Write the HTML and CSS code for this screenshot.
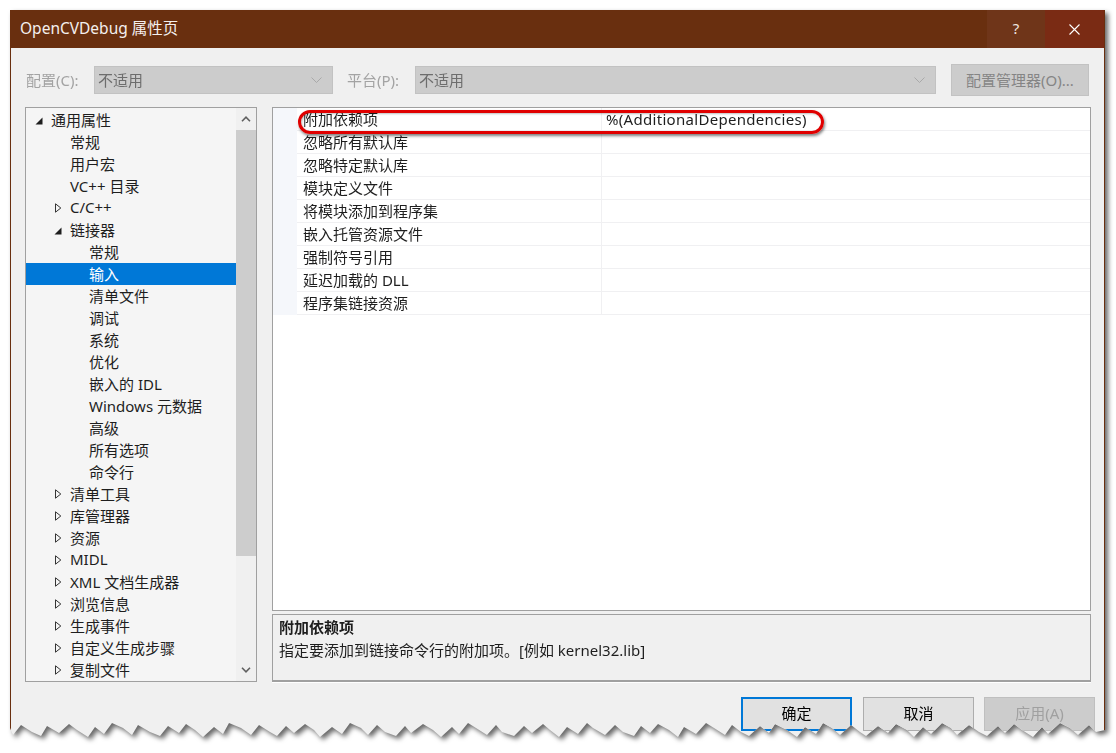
FILE: index.html
```html
<!DOCTYPE html>
<html lang="zh-CN">
<head>
<meta charset="utf-8">
<title>OpenCVDebug 属性页</title>
<link rel="stylesheet" href="styles.css">
</head>
<body>
<div class="frame">
  <div class="window">
    <div class="titlebar">
      <div class="title">OpenCVDebug 属性页</div>
      <div class="tb-btn help">?</div>
      <div class="tb-btn close"><svg width="11" height="11" viewBox="0 0 11 11"><path d="M0.5 0.5L10.5 10.5M10.5 0.5L0.5 10.5" stroke="#fff" stroke-width="1.1"/></svg></div>
    </div>
    <div class="body">
      <div class="toolbar">
        <span class="lbl">配置(C):</span>
        <div class="combo combo-cfg"><span>不适用</span><svg width="11" height="6" viewBox="0 0 11 6"><path d="M0.5 0.5L5.5 5.5L10.5 0.5" stroke="#a9a9a9" fill="none"/></svg></div>
        <span class="lbl lbl-plat">平台(P):</span>
        <div class="combo combo-plat"><span>不适用</span><svg width="11" height="6" viewBox="0 0 11 6"><path d="M0.5 0.5L5.5 5.5L10.5 0.5" stroke="#a9a9a9" fill="none"/></svg></div>
        <div class="mgr-btn">配置管理器(O)...</div>
      </div>
      <div class="main">
        <div class="tree">
          <div class="tree-list">
            <div class="node l0"><span class="tw"><svg class="exp" width="8" height="8" viewBox="0 0 8 8"><path d="M7.5 0.5V7.5H0.5Z" fill="#1e1e1e"/></svg></span>通用属性</div>
            <div class="node l1"><span class="tw"></span>常规</div>
            <div class="node l1"><span class="tw"></span>用户宏</div>
            <div class="node l1"><span class="tw"></span>VC++ 目录</div>
            <div class="node l1"><span class="tw"><svg class="col" width="8" height="10" viewBox="0 0 8 10"><path d="M1.5 0.8L6.8 5L1.5 9.2Z" fill="none" stroke="#333"/></svg></span>C/C++</div>
            <div class="node l1"><span class="tw"><svg class="exp" width="8" height="8" viewBox="0 0 8 8"><path d="M7.5 0.5V7.5H0.5Z" fill="#1e1e1e"/></svg></span>链接器</div>
            <div class="node l2"><span class="tw"></span>常规</div>
            <div class="node l2 sel"><span class="tw"></span>输入</div>
            <div class="node l2"><span class="tw"></span>清单文件</div>
            <div class="node l2"><span class="tw"></span>调试</div>
            <div class="node l2"><span class="tw"></span>系统</div>
            <div class="node l2"><span class="tw"></span>优化</div>
            <div class="node l2"><span class="tw"></span>嵌入的 IDL</div>
            <div class="node l2"><span class="tw"></span>Windows 元数据</div>
            <div class="node l2"><span class="tw"></span>高级</div>
            <div class="node l2"><span class="tw"></span>所有选项</div>
            <div class="node l2"><span class="tw"></span>命令行</div>
            <div class="node l1"><span class="tw"><svg class="col" width="8" height="10" viewBox="0 0 8 10"><path d="M1.5 0.8L6.8 5L1.5 9.2Z" fill="none" stroke="#333"/></svg></span>清单工具</div>
            <div class="node l1"><span class="tw"><svg class="col" width="8" height="10" viewBox="0 0 8 10"><path d="M1.5 0.8L6.8 5L1.5 9.2Z" fill="none" stroke="#333"/></svg></span>库管理器</div>
            <div class="node l1"><span class="tw"><svg class="col" width="8" height="10" viewBox="0 0 8 10"><path d="M1.5 0.8L6.8 5L1.5 9.2Z" fill="none" stroke="#333"/></svg></span>资源</div>
            <div class="node l1"><span class="tw"><svg class="col" width="8" height="10" viewBox="0 0 8 10"><path d="M1.5 0.8L6.8 5L1.5 9.2Z" fill="none" stroke="#333"/></svg></span>MIDL</div>
            <div class="node l1"><span class="tw"><svg class="col" width="8" height="10" viewBox="0 0 8 10"><path d="M1.5 0.8L6.8 5L1.5 9.2Z" fill="none" stroke="#333"/></svg></span>XML 文档生成器</div>
            <div class="node l1"><span class="tw"><svg class="col" width="8" height="10" viewBox="0 0 8 10"><path d="M1.5 0.8L6.8 5L1.5 9.2Z" fill="none" stroke="#333"/></svg></span>浏览信息</div>
            <div class="node l1"><span class="tw"><svg class="col" width="8" height="10" viewBox="0 0 8 10"><path d="M1.5 0.8L6.8 5L1.5 9.2Z" fill="none" stroke="#333"/></svg></span>生成事件</div>
            <div class="node l1"><span class="tw"><svg class="col" width="8" height="10" viewBox="0 0 8 10"><path d="M1.5 0.8L6.8 5L1.5 9.2Z" fill="none" stroke="#333"/></svg></span>自定义生成步骤</div>
            <div class="node l1"><span class="tw"><svg class="col" width="8" height="10" viewBox="0 0 8 10"><path d="M1.5 0.8L6.8 5L1.5 9.2Z" fill="none" stroke="#333"/></svg></span>复制文件</div>
          </div>
          <div class="vscroll">
            <div class="sb-btn"><svg width="10" height="6" viewBox="0 0 10 6"><path d="M1 5.2L5 1.2L9 5.2" stroke="#606060" stroke-width="1.6" fill="none"/></svg></div>
            <div class="thumb"></div>
            <div class="track"></div>
            <div class="sb-btn"><svg width="10" height="6" viewBox="0 0 10 6"><path d="M1 0.8L5 4.8L9 0.8" stroke="#606060" stroke-width="1.6" fill="none"/></svg></div>
          </div>
        </div>
        <div class="right">
          <div class="grid">
            <div class="prop"><span class="pn">附加依赖项</span><span class="pv">%(AdditionalDependencies)</span></div>
            <div class="prop"><span class="pn">忽略所有默认库</span><span class="pv"></span></div>
            <div class="prop"><span class="pn">忽略特定默认库</span><span class="pv"></span></div>
            <div class="prop"><span class="pn">模块定义文件</span><span class="pv"></span></div>
            <div class="prop"><span class="pn">将模块添加到程序集</span><span class="pv"></span></div>
            <div class="prop"><span class="pn">嵌入托管资源文件</span><span class="pv"></span></div>
            <div class="prop"><span class="pn">强制符号引用</span><span class="pv"></span></div>
            <div class="prop"><span class="pn">延迟加载的 DLL</span><span class="pv"></span></div>
            <div class="prop"><span class="pn">程序集链接资源</span><span class="pv"></span></div>
            <div class="mark"></div>
          </div>
          <div class="desc">
            <div class="desc-title">附加依赖项</div>
            <div class="desc-text">指定要添加到链接命令行的附加项。[例如 kernel32.lib]</div>
          </div>
        </div>
      </div>
      <div class="buttons">
        <div class="btn btn-default">确定</div>
        <div class="btn btn-cancel">取消</div>
        <div class="btn btn-disabled">应用(A)</div>
      </div>
    </div>
  </div>
</div>
</body>
</html>
```

FILE: styles.css
```css
* { box-sizing: border-box; }
html, body { margin: 0; padding: 0; background: #ffffff; }
body {
  font-family: "Noto Sans", "Noto Sans CJK SC", sans-serif;
  font-size: 15px;
  color: #000;
  width: 1116px;
  height: 753px;
  overflow: hidden;
}
.frame {
  padding: 10px 0 0 10px;
  filter: drop-shadow(3px 3px 2.5px rgba(0,0,0,0.6));
}
.window {
  width: 1095px;
  height: 740px;
  background: #f0f0f0;
  border-left: 1px solid #692f0f;
  border-right: 1px solid #692f0f;
  clip-path: polygon(0 0, 1095px 0, 1095px 720px, 1086px 722px, 1079px 715px, 1068px 725px, 1060px 718px, 1050px 713px, 1038px 724px, 1032px 717px, 1023px 727px, 1012px 720px, 1004px 714px, 995px 723px, 988px 716px, 977px 726px, 969px 722px, 959px 715px, 947px 725px, 941px 718px, 932px 713px, 921px 724px, 913px 717px, 904px 727px, 897px 720px, 886px 714px, 878px 723px, 868px 716px, 856px 726px, 850px 722px, 841px 715px, 830px 725px, 822px 718px, 813px 713px, 806px 724px, 795px 717px, 787px 727px, 777px 720px, 765px 714px, 759px 723px, 750px 716px, 739px 726px, 731px 722px, 722px 715px, 715px 725px, 704px 718px, 696px 713px, 686px 724px, 674px 717px, 668px 727px, 659px 720px, 648px 714px, 640px 723px, 631px 716px, 624px 726px, 613px 722px, 605px 715px, 595px 725px, 583px 718px, 577px 713px, 568px 724px, 557px 717px, 549px 727px, 540px 720px, 533px 714px, 522px 723px, 514px 716px, 504px 726px, 492px 722px, 486px 715px, 477px 725px, 466px 718px, 458px 713px, 449px 724px, 442px 717px, 431px 727px, 423px 720px, 413px 714px, 401px 723px, 395px 716px, 386px 726px, 375px 722px, 367px 715px, 358px 725px, 351px 718px, 340px 713px, 332px 724px, 322px 717px, 310px 727px, 304px 720px, 295px 714px, 284px 723px, 276px 716px, 267px 726px, 260px 722px, 249px 715px, 241px 725px, 231px 718px, 219px 713px, 213px 724px, 204px 717px, 193px 727px, 185px 720px, 176px 714px, 169px 723px, 158px 716px, 150px 726px, 140px 722px, 128px 715px, 122px 725px, 113px 718px, 102px 713px, 94px 724px, 85px 717px, 78px 727px, 67px 720px, 59px 714px, 49px 723px, 37px 716px, 31px 726px, 22px 722px, 11px 715px, 3px 725px, 0 718px);
}

/* title bar */
.titlebar {
  height: 38px;
  display: flex;
  background: #692f0f;
  color: #ffffff;
}
.title {
  flex: 1;
  padding-left: 9px;
  line-height: 37px;
  font-size: 15.5px;
  color: #f4f0ee;
}
.tb-btn {
  display: flex;
  align-items: center;
  justify-content: center;
}
.help {
  width: 58px;
  background: #6f3519;
  font-size: 15px;
  color: #f0e6e0;
  padding-bottom: 2px;
}
.close {
  width: 59px;
  background: #7a2b14;
}

/* body */
.body {
  padding: 16px 9px 0 14px;
}
.toolbar {
  height: 32px;
  display: flex;
  align-items: center;
  padding-left: 1px;
}
.lbl {
  width: 68px;
  color: #a3a3a3;
  font-size: 15px;
  padding-bottom: 2px;
}
.lbl-plat { margin-left: 14px; }
.combo {
  height: 28px;
  background: #cccccc;
  border: 1px solid #c2c2c2;
  display: flex;
  align-items: center;
  justify-content: space-between;
  padding: 0 10px 2px 3px;
  color: #6d6d6d;
}
.combo svg { margin-top: 2px; }
.combo-cfg { width: 239px; }
.combo-plat { width: 521px; }
.mgr-btn {
  margin-left: 15px;
  width: 138px;
  height: 32px;
  background: #cccccc;
  border: 1px solid #c2c2c2;
  color: #858585;
  display: flex;
  align-items: center;
  justify-content: center;
  padding-bottom: 2px;
}

.main {
  margin-top: 11px;
  display: flex;
  gap: 15px;
  height: 575px;
}

/* tree */
.tree {
  width: 232px;
  height: 575px;
  border: 1px solid #a0a0a0;
  background: #f5f5f5;
  display: flex;
}
.tree-list {
  width: 210px;
  padding-top: 1px;
  overflow: hidden;
}
.node {
  height: 22px;
  display: flex;
  align-items: center;
  white-space: nowrap;
  color: #1e1e1e;
  padding-bottom: 2px;
}
.node.l0 { padding-left: 9px; }
.node.l1 { padding-left: 28px; }
.node.l2 { padding-left: 47px; }
.tw {
  width: 16px;
  height: 20px;
  flex: none;
  display: flex;
  align-items: center;
}
.tw .exp { margin-top: 4px; }
.tw .col { margin-top: 2px; }
.node.sel {
  background: #0078d7;
  color: #ffffff;
}
.vscroll {
  width: 20px;
  display: flex;
  flex-direction: column;
  background: #f0f0f0;
}
.sb-btn {
  height: 22px;
  display: flex;
  align-items: center;
  justify-content: center;
}
.thumb {
  height: 426px;
  background: #cdcdcd;
}
.track { flex: 1; }

/* right column */
.right {
  width: 819px;
  display: flex;
  flex-direction: column;
}
.grid {
  position: relative;
  height: 504px;
  background: #ffffff;
  border: 1px solid #a0a0a0;
}
.prop {
  height: 23px;
  display: flex;
  margin-left: 24px;
  border-bottom: 1px solid #f0f0f2;
  box-shadow: -24px 0 0 #f5f7fb;
}
.pn {
  width: 305px;
  padding-left: 6px;
  line-height: 22px;
  border-right: 1px solid #f0f0f2;
  color: #1e1e1e;
}
.pv {
  flex: 1;
  padding-left: 4px;
  line-height: 22px;
  color: #1e1e1e;
  letter-spacing: 0.3px;
}
.mark {
  position: absolute;
  left: 25px;
  top: 2px;
  width: 526px;
  height: 24px;
  border: 3px solid #e00000;
  border-radius: 12px;
  box-shadow: 1px 2px 3px rgba(0,0,0,0.5), inset 1px 1px 2px rgba(0,0,0,0.25);
}
.desc {
  margin-top: 3px;
  height: 68px;
  border: 1px solid #a0a0a0;
  border-bottom-width: 2px;
  box-shadow: 0 1px 0 #ffffff;
  background: #f0f0f0;
  padding: 1px 0 0 6px;
}
.desc-title {
  font-weight: bold;
  line-height: 22px;
  color: #1e1e1e;
}
.desc-text {
  line-height: 24px;
  color: #1e1e1e;
}

/* buttons */
.buttons {
  margin-top: 15px;
  display: flex;
  justify-content: flex-end;
}
.btn {
  width: 111px;
  height: 34px;
  display: flex;
  align-items: center;
  justify-content: center;
  background: #e1e1e1;
  border: 1px solid #adadad;
  color: #000;
  padding-bottom: 3px;
}
.btn-default { border: 2px solid #0078d7; }
.btn-cancel { margin-left: 11px; }
.btn-disabled {
  margin-left: 10px;
  background: #cccccc;
  border-color: #bfbfbf;
  color: #a0a0a0;
}
```
